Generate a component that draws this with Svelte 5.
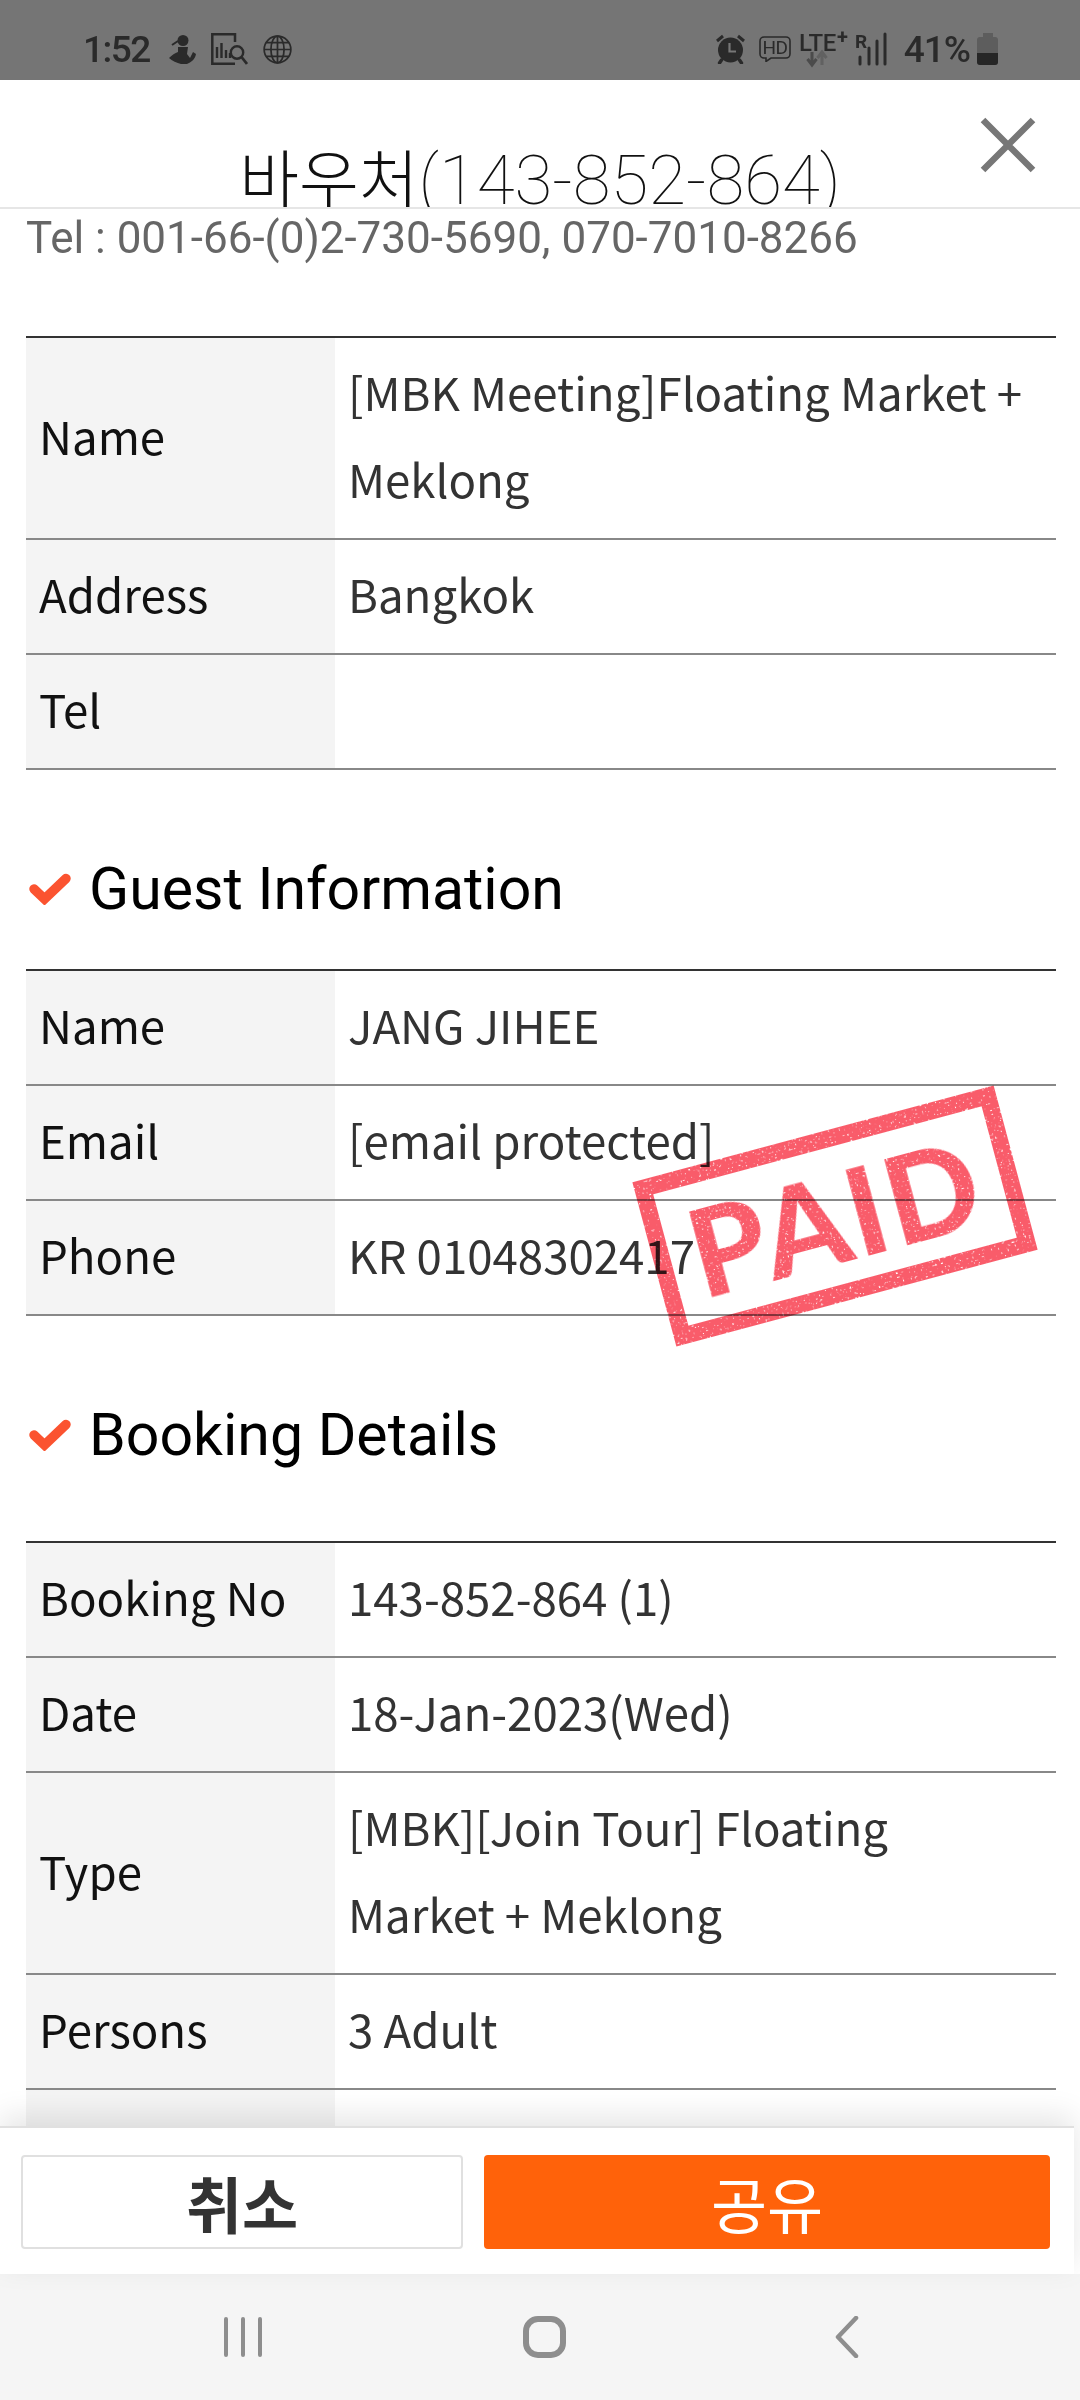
<script>
  const shop = [
    { label: 'Name', value: '[MBK Meeting]Floating Market + Meklong' },
    { label: 'Address', value: 'Bangkok' },
    { label: 'Tel', value: '' }
  ];
  const guest = [
    { label: 'Name', value: 'JANG JIHEE' },
    { label: 'Email', value: '[email protected]' },
    { label: 'Phone', value: 'KR 01048302417' }
  ];
  const booking = [
    { label: 'Booking No', value: '143-852-864 (1)' },
    { label: 'Date', value: '18-Jan-2023(Wed)' },
    { label: 'Type', value: '[MBK][Join Tour] Floating Market + Meklong' },
    { label: 'Persons', value: '3 Adult' },
    { label: '\u00a0', value: '' }
  ];
</script>

{#snippet infoTable(rows)}
  <table>
    <tbody>
      {#each rows as row}
        <tr>
          <th>{row.label}</th>
          <td>{row.value}</td>
        </tr>
      {/each}
    </tbody>
  </table>
{/snippet}

{#snippet check()}
  <svg class="check" viewBox="0 0 42 32" aria-hidden="true">
    <path d="M5 16 L15.5 26 L37 5.5" fill="none" stroke="#fb5330" stroke-width="9.5" stroke-linecap="round" />
  </svg>
{/snippet}

<svg class="defs" aria-hidden="true">
  <filter id="worn" x="0" y="0" width="100%" height="100%">
    <feTurbulence type="fractalNoise" baseFrequency="0.45" numOctaves="2" seed="7" result="noise" />
    <feColorMatrix in="noise" type="matrix" values="0 0 0 0 0  0 0 0 0 0  0 0 0 0 0  0 0 0 -9 7" result="mask" />
    <feComposite in="SourceGraphic" in2="mask" operator="in" />
  </filter>
</svg>

<div class="screen">
  <div class="statusbar">
    <div class="status-left">
      <span class="time">1:52</span>
      <svg width="27" height="31" viewBox="0 0 27 31" aria-hidden="true">
        <circle cx="14" cy="6.5" r="5.5" fill="#2a2a2a" />
        <path d="M9 7 L3 11" stroke="#2a2a2a" stroke-width="2" />
        <path d="M9 13 H19 L18 20 L21 24 L24 18 L27 20 C26 26 22 28 18 30 H12 C8 29 3 27 0 24 C3 21 6 19 9 18 Z" fill="#2a2a2a" />
      </svg>
      <svg width="37" height="32" viewBox="0 0 37 32" aria-hidden="true">
        <path d="M24 9 V1.3 H1.3 V30.7 H24" fill="none" stroke="#2a2a2a" stroke-width="2.5" />
        <path d="M6 25 V14 M10.5 25 V10 M15 25 V17 M19 25 V20" stroke="#2a2a2a" stroke-width="2.4" />
        <circle cx="26" cy="19.5" r="6.2" fill="none" stroke="#2a2a2a" stroke-width="2.4" />
        <path d="M30.5 24 L36 31" stroke="#2a2a2a" stroke-width="2.8" />
      </svg>
      <svg width="29" height="29" viewBox="0 0 30 30" aria-hidden="true">
        <g fill="none" stroke="#2a2a2a" stroke-width="1.8">
          <circle cx="15" cy="15" r="13.8" />
          <ellipse cx="15" cy="15" rx="6.8" ry="13.8" />
          <path d="M15 1.2 V28.8 M1.2 15 H28.8 M3.5 8 H26.5 M3.5 22 H26.5" />
        </g>
      </svg>
    </div>
    <div class="status-right">
      <svg width="29" height="30" viewBox="0 0 29 30" aria-hidden="true">
        <circle cx="14.5" cy="16" r="12.5" fill="#2a2a2a" />
        <path d="M1 7 L7 2 M28 7 L22 2" stroke="#2a2a2a" stroke-width="3" />
        <path d="M5.5 26 L3.5 29 M23.5 26 L25.5 29" stroke="#2a2a2a" stroke-width="3.4" stroke-linecap="round" />
        <path d="M13.5 9 V17.5 H20" fill="none" stroke="#777" stroke-width="2.2" />
      </svg>
      <svg class="hd" width="32" height="26" viewBox="0 0 32 26" aria-hidden="true">
        <path d="M5 1 H27 A4 4 0 0 1 31 5 V18 A4 4 0 0 1 27 22 H12 L7 25.5 V22 H5 A4 4 0 0 1 1 18 V5 A4 4 0 0 1 5 1 Z" fill="none" stroke="#2a2a2a" stroke-width="1.6" />
        <text x="16" y="18" text-anchor="middle" font-size="19" letter-spacing="-0.5">HD</text>
      </svg>
      <svg class="lte" width="51" height="49" viewBox="0 -8 51 49" aria-hidden="true">
        <text x="0" y="18" font-size="24" font-weight="500" letter-spacing="-0.5">LTE</text>
        <text x="38" y="11" font-size="20" font-weight="700">+</text>
        <path d="M13 19 V31 M8.5 26 L13 32 L17.5 26" fill="none" stroke="#4b4b4b" stroke-width="3" />
        <path d="M23 32 V20 M18.5 25 L23 19 L27.5 25" fill="none" stroke="#616161" stroke-width="3" />
      </svg>
      <svg class="signal" width="32" height="40" viewBox="0 -4 32 40" aria-hidden="true">
        <text x="0" y="15" font-size="19" font-weight="700">R</text>
        <path d="M5 24 V31 M14 15 V31 M22 8 V31 M30 1 V31" stroke="#2a2a2a" stroke-width="3" stroke-linecap="round" />
      </svg>
      <span class="pct">41%</span>
      <svg class="battery" width="21" height="32" viewBox="0 0 21 32" aria-hidden="true">
        <path d="M6 0 H16 V4 H18 A3 3 0 0 1 21 7 V29 A3 3 0 0 1 18 32 H3 A3 3 0 0 1 0 29 V7 A3 3 0 0 1 3 4 H6 Z" fill="#5d5d5d" />
        <path d="M0 20 H21 V29 A3 3 0 0 1 18 32 H3 A3 3 0 0 1 0 29 Z" fill="#262626" />
      </svg>
    </div>
  </div>

  <header class="title-bar">
    <h1><span class="ko">바우처</span>(143-852-864)</h1>
    <button class="close" aria-label="close">
      <svg width="56" height="56" viewBox="0 0 56 56" aria-hidden="true">
        <path d="M3 3 L53 53 M53 3 L3 53" stroke="#777" stroke-width="6.5" />
      </svg>
    </button>
  </header>

  <main class="content">
    <p class="tel">Tel : 001-66-(0)2-730-5690, 070-7010-8266</p>

    {@render infoTable(shop)}

    <h2>{@render check()}Guest Information</h2>
    <div class="guest">
      {@render infoTable(guest)}
      <div class="stamp"><span>PAID</span></div>
    </div>

    <h2 class="spaced">{@render check()}Booking Details</h2>
    {@render infoTable(booking)}
  </main>

  <footer class="actions">
    <button class="btn cancel">취소</button>
    <button class="btn share">공유</button>
  </footer>

  <nav class="navbar">
    <svg width="38" height="40" viewBox="0 0 38 40" aria-hidden="true">
      <path d="M2 2 V38 M19 2 V38 M36 2 V38" stroke="#8e8e8e" stroke-width="4" stroke-linecap="round" />
    </svg>
    <svg class="home" width="43" height="42" viewBox="0 0 43 42" aria-hidden="true">
      <rect x="3" y="3" width="37" height="36" rx="12" fill="none" stroke="#8e8e8e" stroke-width="6" />
    </svg>
    <svg width="24" height="42" viewBox="0 0 24 42" aria-hidden="true">
      <path d="M21 2 L3 21 L21 40" fill="none" stroke="#8e8e8e" stroke-width="4.5" stroke-linecap="round" stroke-linejoin="round" />
    </svg>
  </nav>
</div>

<style>
  :global(body) {
    margin: 0;
    background: #fff;
  }

  .defs {
    position: absolute;
    width: 0;
    height: 0;
  }

  .screen {
    display: flex;
    flex-direction: column;
    width: 1080px;
    height: 2400px;
    overflow: hidden;
    font-family: "Noto Sans CJK KR", "Noto Sans", sans-serif;
  }

  .statusbar {
    flex: 0 0 80px;
    display: flex;
    justify-content: space-between;
    align-items: center;
    box-sizing: border-box;
    padding: 18px 82px 0 83px;
    background: #757575;
    color: #2a2a2a;
    fill: #2a2a2a;
    font-family: Roboto, sans-serif;
  }

  .status-left,
  .status-right {
    display: flex;
    align-items: center;
  }

  .status-left {
    gap: 15px;
  }

  .time {
    font-size: 37px;
    font-weight: 500;
    letter-spacing: -1.5px;
    margin-right: 4px;
  }

  .hd {
    margin-left: 14px;
  }

  .lte {
    margin-left: 8px;
  }

  .signal {
    margin-left: 5px;
  }

  .pct {
    margin-left: 17px;
    font-size: 37px;
    font-weight: 500;
    letter-spacing: -1px;
  }

  .battery {
    margin-left: 7px;
  }

  .title-bar {
    flex: 0 0 127px;
    position: relative;
    overflow: hidden;
    border-bottom: 2px solid #e6e6e6;
    background: #fff;
  }

  h1 {
    margin: 54px 0 0;
    text-align: center;
    font-size: 69px;
    font-weight: 100;
    line-height: 84px;
    color: #111;
    white-space: nowrap;
    font-family: Roboto, "Noto Sans CJK KR", sans-serif;
  }

  .ko {
    font-family: "Noto Sans CJK KR", sans-serif;
    font-size: 65px;
    font-weight: 300;
  }

  .close {
    position: absolute;
    top: 37px;
    right: 44px;
    padding: 0;
    border: 0;
    background: none;
    line-height: 0;
  }

  .content {
    flex: 1;
    min-height: 0;
    overflow: hidden;
    padding: 0 24px 0 26px;
  }

  .tel {
    margin: 4px 0 73px;
    font-family: Roboto, sans-serif;
    font-size: 44px;
    line-height: 50px;
    color: #666;
  }

  table {
    width: 100%;
    border-collapse: collapse;
    table-layout: fixed;
    border-top: 2px solid #333;
    font-size: 45.6px;
    line-height: 87px;
  }

  tr {
    border-bottom: 2px solid #888;
  }

  th,
  td {
    padding: 10px 14px 16px 13px;
    text-align: left;
    font-weight: 400;
  }

  th {
    width: 282px;
    background: #f4f4f4;
    color: #111;
  }

  td {
    color: #333;
  }

  h2 {
    display: flex;
    align-items: center;
    gap: 18px;
    margin: 0;
    padding: 85px 0 46px 3px;
    font-family: Roboto, sans-serif;
    font-size: 59px;
    font-weight: 400;
    line-height: 68px;
    color: #000;
  }

  h2.spaced {
    padding-bottom: 72px;
  }

  .check {
    width: 42px;
    height: 32px;
    flex: none;
  }

  .guest {
    position: relative;
  }

  .stamp {
    position: absolute;
    left: 622px;
    top: 162px;
    box-sizing: border-box;
    display: flex;
    align-items: center;
    justify-content: center;
    width: 374px;
    height: 170px;
    border: 17px solid #f95c6b;
    transform: rotate(-15deg);
    mix-blend-mode: multiply;
    filter: url(#worn);
    color: #f95c6b;
    font-family: Lato, sans-serif;
    font-size: 122px;
    font-weight: 900;
    letter-spacing: 3px;
    line-height: 1;
  }

  .actions {
    flex: 0 0 148px;
    position: relative;
    display: flex;
    gap: 21px;
    box-sizing: border-box;
    width: 1074px;
    padding: 27px 24px 25px 21px;
    border-top: 2px solid #e0e0e0;
    background: #fff;
    box-shadow: 0 -10px 28px rgba(0, 0, 0, 0.1);
  }

  .btn {
    display: flex;
    align-items: center;
    justify-content: center;
    border-radius: 4px;
    font-family: "Noto Sans CJK KR", sans-serif;
    font-size: 61px;
    padding: 0;
  }

  .cancel {
    width: 442px;
    border: 2px solid #e0e0e0;
    background: #fff;
    color: #333;
    font-weight: 700;
  }

  .share {
    flex: 1;
    border: 0;
    background: #ff620a;
    color: #fff;
    font-weight: 400;
  }

  .navbar {
    flex: 0 0 126px;
    display: flex;
    align-items: center;
    background: #f5f5f5;
    padding: 0 221px 0 224px;
    justify-content: space-between;
  }

  .home {
    margin-right: 8px;
  }
</style>
